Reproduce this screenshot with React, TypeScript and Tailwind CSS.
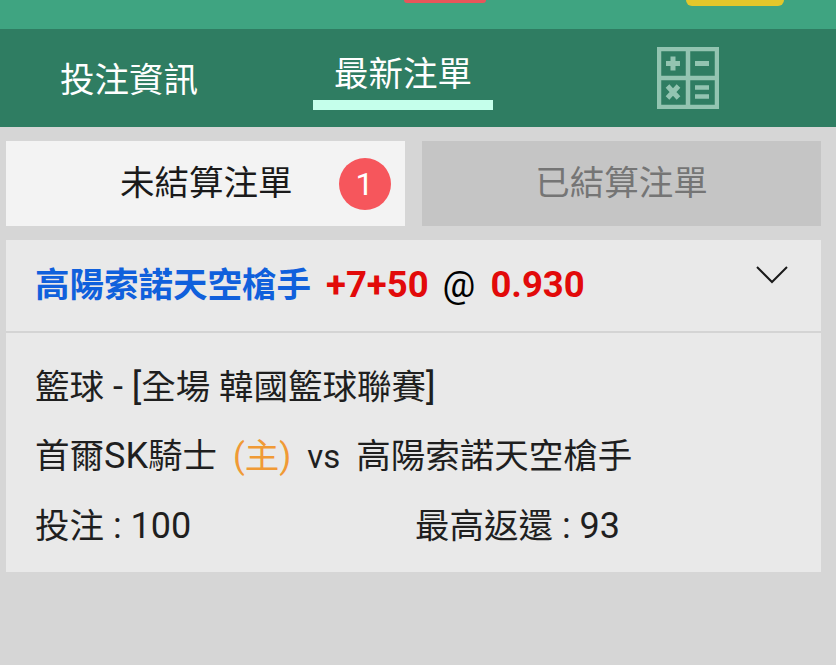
import React from 'react';

const font = { fontFamily: '"Roboto", "Noto Sans CJK TC", sans-serif' };

const CalcIcon = () => (
  <svg width="62" height="62" viewBox="0 0 62 62" fill="none" stroke="#93c4b1">
    <rect x="2" y="2" width="58" height="58" strokeWidth="4.500" />
    <path d="M31 2V60M2 31H60" strokeWidth="4.500" />
    <path d="M9 16.500H23M16 9.500V23.500" strokeWidth="5" />
    <path d="M38 16.500H52" strokeWidth="5" />
    <path d="M10.500 39L21.500 51M21.500 39L10.500 51" strokeWidth="5" />
    <path d="M38 40.500H52M38 49.500H52" strokeWidth="4.500" />
  </svg>
);

const Chevron = () => (
  <svg width="32" height="18" viewBox="0 0 32 18" fill="none" stroke="#1a1a1a" strokeWidth="2">
    <path d="M1 1L16 16L31 1" />
  </svg>
);

export default function App() {
  return (
    <div className="h-[665px] w-[836px] overflow-hidden bg-[#d6d6d6]" style={font}>
      {/* top strip, mostly cropped */}
      <div className="flex h-[29px] items-start bg-[#3fa481]">
        <div className="ml-[404px] h-[3px] w-[82px] rounded-b-[10px] bg-[#e8555a]" />
        <div className="ml-[200px] h-[6px] w-[98px] rounded-b-[14px] bg-[#e3c72b]" />
      </div>

      {/* tabs */}
      <div className="flex h-[98px] bg-[#2f7d62] text-[34.500px] leading-none text-white">
        <div className="ml-[60px] mt-[34px] w-[253px]">投注資訊</div>
        <div className="flex w-[180px] flex-col items-center">
          <div className="mt-[28px]">最新注單</div>
          <div className="mt-[8px] h-[10px] w-full bg-[#c5ffeb]" />
        </div>
        <div className="ml-[164px] mt-[18px]">
          <CalcIcon />
        </div>
      </div>

      {/* settled / unsettled */}
      <div className="mt-[14px] flex h-[85px] gap-[17px] pl-[6px] text-[34.500px] leading-none">
        <div className="flex w-[399px] items-center bg-[#f3f3f3] pl-[114px] text-[#1a1a1a]">
          <span className="-mt-[1px]">未結算注單</span>
          <span className="ml-[46px] flex h-[52px] w-[52px] items-center justify-center rounded-full bg-[#f6565c] text-[32px] text-white">
            1
          </span>
        </div>
        <div className="flex w-[399px] items-center justify-center bg-[#c5c5c5] pb-[1px] text-[#757575]">已結算注單</div>
      </div>

      {/* bet card */}
      <div className="ml-[6px] mt-[14px] w-[815px] bg-[#e9e9e9] text-[34.500px] leading-none text-[#1f1f1f]">
        <div className="relative flex h-[93px] items-center border-b-2 border-[#d4d4d4] pl-[29px] font-bold">
          <span className="text-[#1060dc]">高陽索諾天空槍手</span>
          <span className="ml-[15px] text-[36.500px] text-[#e20a0a]">+7+50</span>
          <span className="ml-[14px] text-[36.500px] font-normal text-black">@</span>
          <span className="ml-[15px] text-[36.500px] text-[#e20a0a]">0.930</span>
          <div className="absolute right-[33px] top-[26px]">
            <Chevron />
          </div>
        </div>
        <div className="h-[239px] pl-[29px] pt-[36px]">
          <div>
            籃球<span className="text-[36px]"> - [</span>全場 韓國籃球聯賽<span className="text-[36px]">]</span>
          </div>
          <div className="mt-[33px] flex items-center">
            <span>
              首爾<span className="text-[36px]">SK</span>騎士
            </span>
            <span className="ml-[16px] text-[#f09a35]">(主)</span>
            <span className="ml-[16px] text-[33px]">vs</span>
            <span className="ml-[16px]">高陽索諾天空槍手</span>
          </div>
          <div className="mt-[34px] flex text-[36px]">
            <span className="w-[380px]">
              <span className="text-[34.500px]">投注</span> : 100
            </span>
            <span>
              <span className="text-[34.500px]">最高返還</span> : 93
            </span>
          </div>
        </div>
      </div>
    </div>
  );
}
